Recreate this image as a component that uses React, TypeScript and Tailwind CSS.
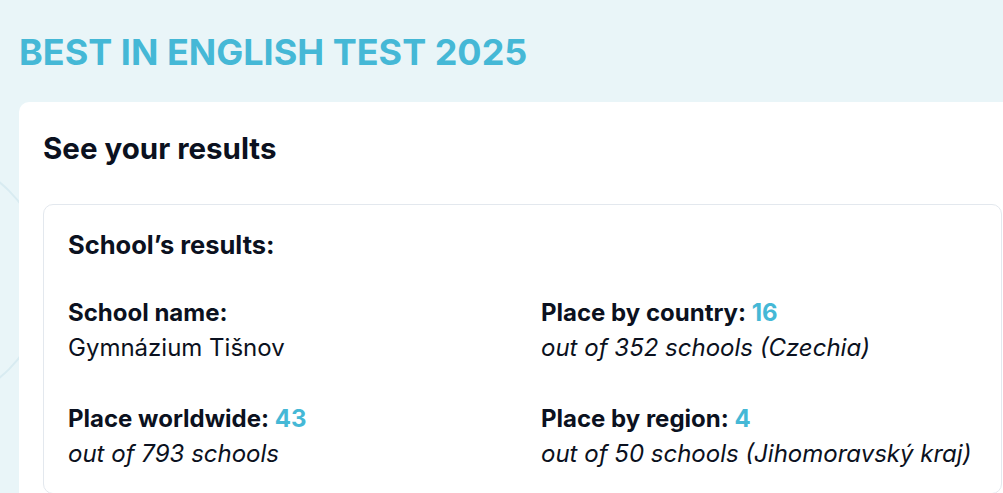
import React from 'react';

const results = [
  { label: 'School name:', value: null, sub: 'Gymnázium Tišnov', italic: false },
  { label: 'Place by country:', value: '16', sub: 'out of 352 schools (Czechia)', italic: true },
  { label: 'Place worldwide:', value: '43', sub: 'out of 793 schools', italic: true },
  { label: 'Place by region:', value: '4', sub: 'out of 50 schools (Jihomoravský kraj)', italic: true },
];

export default function App() {
  return (
    <div className="relative h-screen overflow-hidden bg-[#e9f5f8] font-['Inter',sans-serif] text-[#0b1120]">
      {/* decorative ring behind the card */}
      <svg className="absolute left-[-210px] top-[150px]" width="260" height="260" viewBox="0 0 260 260">
        <circle cx="130" cy="130" r="126" fill="none" stroke="#d8ebf1" strokeWidth="2" />
      </svg>

      <div className="relative pl-[19px]">
        <h1 className="pt-[27px] pb-[25px] text-[36px] leading-[50px] font-bold text-[#45b8d6]">
          BEST IN ENGLISH TEST 2025
        </h1>

        <div className="rounded-l-[10px] bg-white pl-6 pt-[28px] pb-10">
          <h2 className="text-[29.5px] leading-9 font-bold">See your results</h2>

          <div className="mt-[38px] mr-[1px] rounded-[10px] border border-[#e3e8ee] px-6 pt-6 pb-[22px]">
            <h3 className="text-[25.5px] leading-8 font-bold">School’s results:</h3>

            <div className="mt-[34px] grid grid-cols-[473px_1fr] gap-y-[36px]">
              {results.map((r) => (
                <div key={r.label} className="text-[24px] leading-[35px]">
                  <div className="font-bold">
                    {r.label}
                    {r.value && <span className="text-[#45b8d6]"> {r.value}</span>}
                  </div>
                  <div className={r.italic ? 'italic' : ''}>{r.sub}</div>
                </div>
              ))}
            </div>
          </div>
        </div>
      </div>
    </div>
  );
}
